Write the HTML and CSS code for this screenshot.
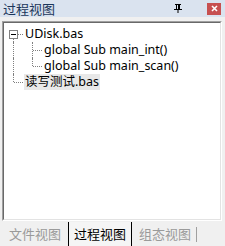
FILE: index.html
```html
<!DOCTYPE html>
<html>
<head>
<meta charset="utf-8">
<link rel="stylesheet" href="styles.css">
</head>
<body>
<div class="window">
  <div class="titlebar">
    <span class="title">过程视图</span>
    <span class="pin">
      <svg width="8" height="9" viewBox="0 0 8 9"><path d="M1 0h6v1H6v4h2v1H4.5v3h-1V6H0V5h2V1H1z M3 1v4h1V1z" fill="#000"/></svg>
    </span>
    <span class="close">
      <svg width="7" height="7" viewBox="0 0 7 7"><path d="M1 1L6 6M6 1L1 6" stroke="#fff" stroke-width="1.6"/></svg>
    </span>
  </div>
  <div class="panel">
    <div class="tree">
      <div class="row">
        <div class="cell root-cell"><span class="minus"></span></div>
        <span class="label">UDisk.bas</span>
      </div>
      <div class="row">
        <div class="cell vline"></div>
        <div class="cell tee"></div>
        <span class="label">global Sub main_int()</span>
      </div>
      <div class="row">
        <div class="cell vline"></div>
        <div class="cell elbow"></div>
        <span class="label">global Sub main_scan()</span>
      </div>
      <div class="row">
        <div class="cell elbow"></div>
        <span class="label selected">读写测试.bas</span>
      </div>
    </div>
  </div>
  <div class="tabs">
    <span class="tab">文件视图</span>
    <span class="tab active">过程视图</span>
    <span class="tab last">组态视图</span>
    <span class="sep"></span>
  </div>
</div>
</body>
</html>
```
FILE: styles.css
```css
html, body {
  margin: 0;
  padding: 0;
}
body {
  width: 225px;
  height: 246px;
  overflow: hidden;
  background: #f0f0f0;
  font-family: "Noto Sans", "Noto Sans CJK SC", sans-serif;
  font-size: 12.5px;
}
.window {
  display: flex;
  flex-direction: column;
  height: 246px;
}
.titlebar {
  height: 17px;
  background: #dae3ef;
  display: flex;
  align-items: center;
  padding-left: 3px;
  flex-shrink: 0;
}
.title {
  font-family: "Noto Sans CJK SC", sans-serif;
  font-size: 13px;
  color: #1b365a;
  flex: 1;
  line-height: 17px;
}
.pin {
  display: flex;
  width: 8px;
  height: 9px;
  margin-right: 25px;
}
.close {
  width: 14px;
  height: 12px;
  background: #c75050;
  display: flex;
  align-items: center;
  justify-content: center;
  margin-right: 4px;
}
.panel {
  margin: 4px 3px 0 2px;
  height: 198px;
  background: #fff;
  border-top: 1px solid #a0a0a0;
  border-left: 1px solid #a0a0a0;
  border-right: 1px solid #ffffff;
  border-bottom: 1px solid #ffffff;
  flex-shrink: 0;
}
.tree {
  height: 100%;
  border-top: 1px solid #696969;
  border-left: 1px solid #696969;
  border-right: 1px solid #e3e3e3;
  border-bottom: 1px solid #e3e3e3;
  padding-top: 3px;
  box-sizing: border-box;
}
.row {
  display: flex;
  height: 16px;
  align-items: stretch;
}
.cell {
  width: 19px;
  position: relative;
  flex-shrink: 0;
}
.label {
  margin-left: 1px;
  line-height: 16px;
  color: #000;
  white-space: nowrap;
  padding: 0 1px;
}
.selected {
  background: #e8e8e8;
  font-family: "Noto Sans", "Noto Sans CJK SC", sans-serif;
}
.root-cell::before {
  content: "";
  position: absolute;
  left: 9px;
  top: 12px;
  bottom: 0;
  border-left: 1px dotted #808080;
}
.root-cell::after {
  content: "";
  position: absolute;
  left: 14px;
  right: 0;
  top: 8px;
  border-top: 1px dotted #808080;
}
.minus {
  position: absolute;
  left: 5px;
  top: 4px;
  width: 7px;
  height: 7px;
  border: 1px solid #808080;
  background: #fff;
}
.minus::after {
  content: "";
  position: absolute;
  left: 1px;
  top: 3px;
  width: 5px;
  height: 1px;
  background: #000;
}
.vline::before {
  content: "";
  position: absolute;
  left: 9px;
  top: 0;
  bottom: 0;
  border-left: 1px dotted #808080;
}
.tee::before {
  content: "";
  position: absolute;
  left: 9px;
  top: 0;
  bottom: 0;
  border-left: 1px dotted #808080;
}
.tee::after, .elbow::after {
  content: "";
  position: absolute;
  left: 10px;
  right: 0;
  top: 8px;
  border-top: 1px dotted #808080;
}
.elbow::before {
  content: "";
  position: absolute;
  left: 9px;
  top: 0;
  height: 8px;
  border-left: 1px dotted #808080;
}
.tabs {
  display: flex;
  align-items: flex-start;
  padding-left: 2px;
  flex: 1;
}
.tab {
  font-family: "Noto Sans CJK SC", sans-serif;
  font-size: 13px;
  color: #9a9a9a;
  padding: 0 7px;
  height: 24px;
  line-height: 23px;
  margin-top: 1px;
}
.tab.active {
  color: #000;
  background: #f5f5f5;
  border: 1px solid #000;
  border-top: none;
  padding: 0 5px;
}
.tab.last {
  padding-right: 5px;
}
.sep {
  width: 1px;
  height: 15px;
  background: #a0a0a0;
  margin-top: 6px;
}
```
